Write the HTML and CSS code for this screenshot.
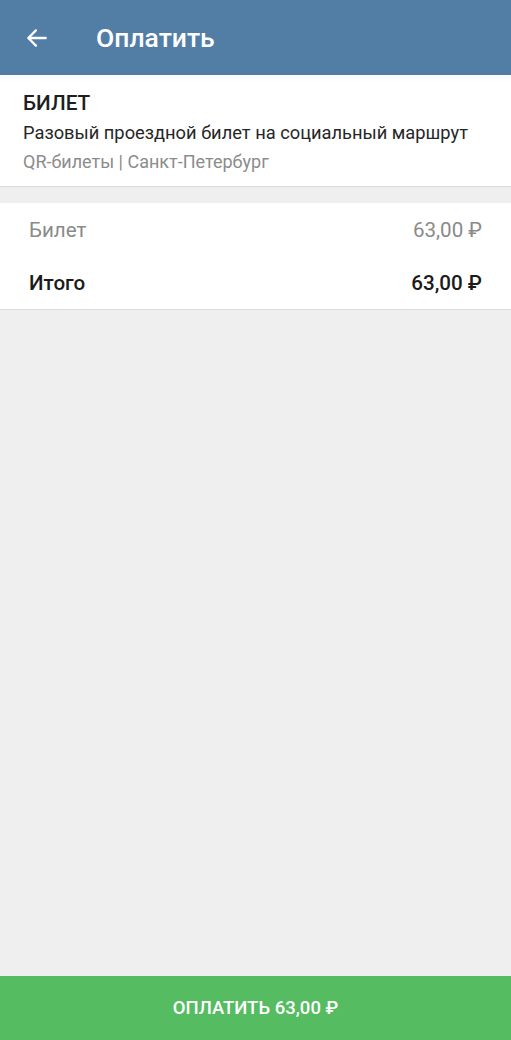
FILE: index.html
```html
<!DOCTYPE html>
<html lang="ru">
<head>
    <meta charset="UTF-8">
    <meta name="viewport" content="width=device-width, initial-scale=1.0">
    <title>Оплатить</title>
    <link rel="stylesheet" href="styles.css">
</head>
<body>
<div class="app">
    <header class="topbar">
        <button class="back" aria-label="Назад">
            <svg width="26" height="26" viewBox="0 0 24 24">
                <path d="M20 12H5M11 5l-7 7 7 7" fill="none" stroke="#fff" stroke-width="2.2" stroke-linecap="round" stroke-linejoin="round"/>
            </svg>
        </button>
        <h1>Оплатить</h1>
    </header>

    <section class="card ticket">
        <h2>БИЛЕТ</h2>
        <p class="desc">Разовый проездной билет на социальный маршрут</p>
        <p class="meta">QR-билеты | Санкт-Петербург</p>
    </section>

    <section class="card summary">
        <div class="row muted">
            <span>Билет</span>
            <span>63,00 ₽</span>
        </div>
        <div class="row total">
            <span>Итого</span>
            <span>63,00 ₽</span>
        </div>
    </section>

    <div class="spacer"></div>

    <button class="pay">ОПЛАТИТЬ 63,00 ₽</button>
</div>
</body>
</html>
```

FILE: styles.css
```css
* {
    box-sizing: border-box;
    margin: 0;
    padding: 0;
}

body {
    font-family: Roboto, 'Noto Sans', sans-serif;
    background: #efefef;
    color: #1f1f1f;
}

.app {
    min-height: 100vh;
    display: flex;
    flex-direction: column;
}

.topbar {
    height: 75px;
    flex-shrink: 0;
    background: #527ea5;
    display: flex;
    align-items: center;
    padding-left: 23px;
    box-shadow: 0 1px 2px rgba(0, 0, 0, 0.15);
}

.back {
    background: none;
    border: none;
    width: 28px;
    height: 28px;
    display: flex;
    align-items: center;
    justify-content: center;
    margin-right: 45px;
    margin-top: 1px;
}

.topbar h1 {
    color: #fff;
    font-size: 26.5px;
    font-weight: 500;
    margin-top: -1px;
}

.card {
    background: #fff;
    box-shadow: 0 1px 1px rgba(0, 0, 0, 0.08);
}

.ticket {
    padding: 13px 23px 10px;
}

.ticket h2 {
    font-size: 20.8px;
    font-weight: 500;
    line-height: 30px;
    color: #1e1e1e;
}

.desc {
    font-size: 18.3px;
    line-height: 29px;
    color: #262626;
}

.meta {
    font-size: 18px;
    line-height: 29px;
    color: #8c8c8c;
}

.summary {
    margin-top: 17px;
    padding: 0 29px;
}

.row {
    display: flex;
    justify-content: space-between;
    align-items: center;
    height: 53px;
    font-size: 20.6px;
}

.row.muted {
    color: #8a8a8a;
}

.row.total {
    font-weight: 500;
    color: #1b1b1b;
}

.spacer {
    flex: 1;
}

.pay {
    height: 64px;
    width: 100%;
    flex-shrink: 0;
    border: none;
    background: #55bc62;
    color: #fff;
    font-family: Roboto, 'Noto Sans', sans-serif;
    font-size: 18.5px;
    font-weight: 500;
}
```
